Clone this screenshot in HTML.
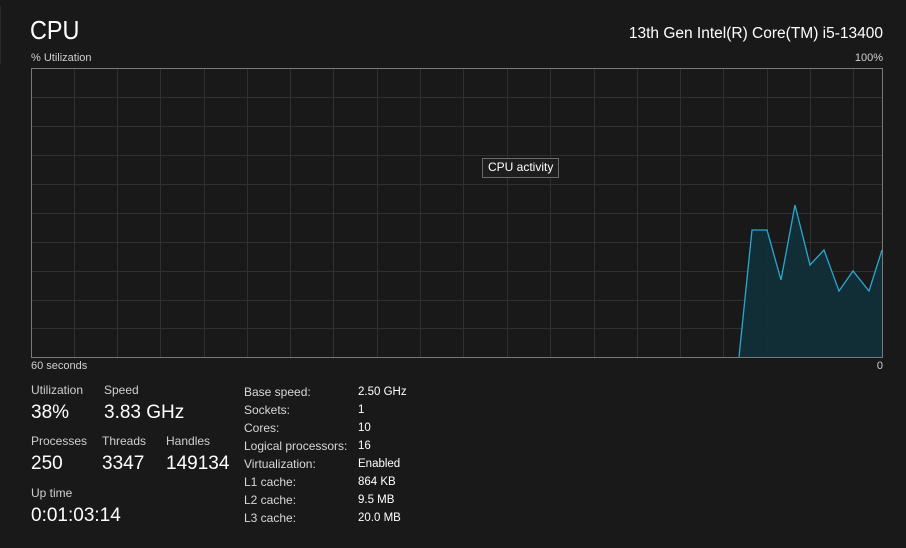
<!DOCTYPE html>
<html><head><meta charset="utf-8"><style>
body{margin:0;width:906px;height:548px;background:#191919;overflow:hidden;font-family:"Segoe UI","Liberation Sans",sans-serif;color:#fff;position:relative}
.a{position:absolute;white-space:nowrap}
.l{font-size:12px;color:#cfcfcf}
.v{font-size:19px;color:#fff}
.s{font-size:12px;color:#d8d8d8}
.sv{font-size:11.5px;color:#fff}
</style></head><body>
<div class="a" style="left:0;top:6px;width:1px;height:58px;background:#2a2a2a"></div>
<div class="a" style="left:30px;top:13px;font-size:26px;line-height:34px;color:#fff;transform:scaleX(0.9);transform-origin:left">CPU</div>
<div class="a" style="right:23px;top:25px;font-size:15.5px;color:#fff">13th Gen Intel(R) Core(TM) i5-13400</div>
<div class="a l" style="left:31px;top:52px;font-size:11px">% Utilization</div>
<div class="a l" style="right:23px;top:52px;font-size:11px">100%</div>
<svg class="a" style="left:0;top:0" width="906" height="548">
<g stroke="#303030" stroke-width="1">
<line x1="31" y1="97.5" x2="882" y2="97.5"/><line x1="31" y1="126.5" x2="882" y2="126.5"/><line x1="31" y1="155.5" x2="882" y2="155.5"/><line x1="31" y1="184.5" x2="882" y2="184.5"/><line x1="31" y1="213.5" x2="882" y2="213.5"/><line x1="31" y1="242.5" x2="882" y2="242.5"/><line x1="31" y1="271.5" x2="882" y2="271.5"/><line x1="31" y1="300.5" x2="882" y2="300.5"/><line x1="31" y1="328.5" x2="882" y2="328.5"/>
<line x1="74.5" y1="68" x2="74.5" y2="357"/><line x1="117.5" y1="68" x2="117.5" y2="357"/><line x1="160.5" y1="68" x2="160.5" y2="357"/><line x1="204.5" y1="68" x2="204.5" y2="357"/><line x1="247.5" y1="68" x2="247.5" y2="357"/><line x1="290.5" y1="68" x2="290.5" y2="357"/><line x1="333.5" y1="68" x2="333.5" y2="357"/><line x1="377.5" y1="68" x2="377.5" y2="357"/><line x1="420.5" y1="68" x2="420.5" y2="357"/><line x1="463.5" y1="68" x2="463.5" y2="357"/><line x1="507.5" y1="68" x2="507.5" y2="357"/><line x1="550.5" y1="68" x2="550.5" y2="357"/><line x1="594.5" y1="68" x2="594.5" y2="357"/><line x1="637.5" y1="68" x2="637.5" y2="357"/><line x1="680.5" y1="68" x2="680.5" y2="357"/><line x1="723.5" y1="68" x2="723.5" y2="357"/><line x1="767.5" y1="68" x2="767.5" y2="357"/><line x1="810.5" y1="68" x2="810.5" y2="357"/><line x1="853.5" y1="68" x2="853.5" y2="357"/>
</g>
<polygon points="739,357 752,230 767,230 781,280 795,205 810,265 824,250 839,291 853,271 869,291 882,250 882,357" fill="#11303a" fill-opacity="0.9"/>
<polyline points="739,357 752,230 767,230 781,280 795,205 810,265 824,250 839,291 853,271 869,291 882,250" fill="none" stroke="#2aa8d0" stroke-width="1.3"/>
<rect x="31.5" y="68.5" width="851" height="289" fill="none" stroke="#7a7a7a" stroke-width="1"/>
<rect x="482.5" y="158.5" width="76" height="19" fill="#1e1e1e" stroke="#6a6a6a"/>
</svg>
<div class="a" style="left:488px;top:160px;font-size:12px;color:#fff">CPU activity</div>
<div class="a l" style="left:31px;top:360px;font-size:11px">60 seconds</div>
<div class="a l" style="right:23px;top:360px;font-size:11px">0</div>
<div class="a l" style="left:31px;top:383px">Utilization</div>
<div class="a l" style="left:104px;top:383px">Speed</div>
<div class="a v" style="left:31px;top:402px">38%</div>
<div class="a v" style="left:104px;top:402px">3.83 GHz</div>
<div class="a l" style="left:31px;top:434px">Processes</div>
<div class="a l" style="left:102px;top:434px">Threads</div>
<div class="a l" style="left:166px;top:434px">Handles</div>
<div class="a v" style="left:31px;top:453px">250</div>
<div class="a v" style="left:102px;top:453px">3347</div>
<div class="a v" style="left:166px;top:453px">149134</div>
<div class="a l" style="left:31px;top:486px">Up time</div>
<div class="a v" style="left:31px;top:505px">0:01:03:14</div>
<div class="a s" style="left:244px;top:383px;line-height:18px">Base speed:<br>Sockets:<br>Cores:<br>Logical processors:<br>Virtualization:<br>L1 cache:<br>L2 cache:<br>L3 cache:</div>
<div class="a sv" style="left:358px;top:383px;line-height:18px">2.50 GHz<br>1<br>10<br>16<br>Enabled<br>864 KB<br>9.5 MB<br>20.0 MB</div>
</body></html>
